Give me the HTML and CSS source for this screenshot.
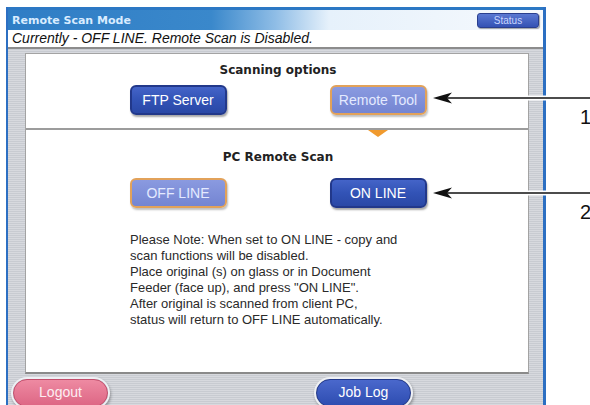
FILE: index.html
```html
<!DOCTYPE html>
<html>
<head>
<meta charset="utf-8">
<link rel="stylesheet" href="styles.css">
</head>
<body>
<div class="stage">
  <div class="screen">
    <div class="titlebar"><span class="title">Remote Scan Mode</span></div>
    <div class="statusline">Currently - OFF LINE. Remote Scan is Disabled.</div>
    <div class="status-btn">Status</div>
    <div class="workarea">
      <div class="panel">
        <section class="options">
          <h2 class="heading">Scanning options</h2>
          <div class="btn-row">
            <span class="btn dark">FTP Server</span>
            <span class="btn light sel">Remote Tool</span>
          </div>
        </section>
        <section class="remote">
          <h2 class="heading">PC Remote Scan</h2>
          <div class="btn-row">
            <span class="btn light">OFF LINE</span>
            <span class="btn dark">ON LINE</span>
          </div>
          <p class="note">Please Note: When set to ON LINE - copy and<br>scan functions will be disabled.<br>Place original (s) on glass or in Document<br>Feeder (face up), and press "ON LINE".<br>After original is scanned from client PC,<br>status will return to OFF LINE automatically.</p>
        </section>
      </div>
      <div class="footer">
        <span class="pill pink">Logout</span>
        <span class="pill blue">Job Log</span>
      </div>
    </div>
  </div>
</div>
<svg class="callouts" width="590" height="405" viewBox="0 0 590 405">
  <g>
    <line x1="440" y1="98" x2="590" y2="98" stroke="#fff" stroke-width="5"/>
    <line x1="440" y1="98" x2="590" y2="98" stroke="#111" stroke-width="1.3"/>
    <polygon points="433,98 452,92.5 447,98 452,103.5" fill="#111"/>
    <line x1="440" y1="193" x2="590" y2="193" stroke="#fff" stroke-width="5"/>
    <line x1="440" y1="193" x2="590" y2="193" stroke="#111" stroke-width="1.3"/>
    <polygon points="433,193 452,187.5 447,193 452,198.5" fill="#111"/>
  </g>
  <text x="580" y="124" class="num">1</text>
  <text x="580" y="219" class="num">2</text>
</svg>
</body>
</html>
```

FILE: styles.css
```css
* { box-sizing: border-box; margin: 0; padding: 0; }
html, body { width: 590px; height: 405px; overflow: hidden; background: #fff; }
body { font-family: "Liberation Sans", Arial, sans-serif; position: relative; }

.stage { padding: 7px 0 0 6px; }

.screen {
  width: 540px;
  height: 398px;
  overflow: hidden;
  position: relative;
  display: flex;
  flex-direction: column;
  border-left: 2px solid #2c6fc2;
  border-right: 3px solid #2c6fc2;
  background: repeating-linear-gradient(to bottom, #c8cbd1 0 1px, #d7d9de 1px 2px);
}

.titlebar {
  height: 23px;
  flex: none;
  display: flex;
  align-items: center;
  padding-left: 4px;
  border-top: 3px solid #2c78c4;
  background: linear-gradient(to right, #2f7dc5 0%, #3a88cb 38%, #8fbde6 50%, #e6f1fb 60%, #f6f9fd 100%);
}
.title {
  font: bold 11px "DejaVu Sans", sans-serif;
  color: #d9ecff;
}

.statusline {
  height: 19px;
  flex: none;
  background: #fff;
  border-bottom: 2px solid #8c8c8c;
  padding-left: 4px;
  font: italic 14px/17px "Liberation Sans", Arial, sans-serif;
  color: #111;
}

.status-btn {
  position: absolute;
  top: 6px;
  right: 4px;
  width: 62px;
  height: 15px;
  border-radius: 3px;
  background: linear-gradient(to bottom, #5a78d2, #3452b4);
  border: 1px solid #2a3f8e;
  box-shadow: 1px 1px 1px rgba(0,0,0,0.35);
  color: #c9d6ff;
  font: 10px/13px "Liberation Sans", Arial, sans-serif;
  text-align: center;
}

.workarea {
  flex: 1;
  display: flex;
  flex-direction: column;
  padding: 4px 14px 0 17px;
}

.panel {
  height: 321px;
  flex: none;
  background: #fff;
  border: 1px solid #a3a3a3;
  border-bottom: 2px solid #8a8a8a;
  display: flex;
  flex-direction: column;
}

.heading {
  font: bold 12px/16px "DejaVu Sans", sans-serif;
  color: #222;
  text-align: center;
  padding-left: 2px;
}

.options {
  height: 76px;
  flex: none;
  border-bottom: 2px solid #9c9c9c;
  padding-top: 8px;
  display: flex;
  flex-direction: column;
  gap: 7px;
}

.btn-row {
  display: flex;
  justify-content: center;
  gap: 103px;
  padding-left: 2px;
}

.btn {
  position: relative;
  width: 97px;
  height: 30px;
  border-radius: 6px;
  font: 14px/26px "Liberation Sans", Arial, sans-serif;
  text-align: center;
}
.btn.dark {
  background: linear-gradient(to bottom, #4464c8 0%, #3253b6 50%, #2a48a6 100%);
  border: 2px solid #22388a;
  color: #fff;
  box-shadow: 1px 2px 2px rgba(0,0,0,0.35);
}
.btn.light {
  background: linear-gradient(to bottom, #8a9ae0, #7485d2);
  border: 2px solid #e2a25a;
  color: #e4eaff;
  box-shadow: 1px 2px 2px rgba(0,0,0,0.25);
}
.btn.sel::after {
  content: "";
  position: absolute;
  left: 50%;
  top: 43px;
  margin-left: -10px;
  border-left: 10px solid transparent;
  border-right: 10px solid transparent;
  border-top: 7px solid #f09a2e;
}

.remote {
  flex: 1;
  padding-top: 19px;
  display: flex;
  flex-direction: column;
}
.remote .btn-row { margin-top: 13px; }

.note {
  margin-top: 24px;
  padding-left: 104px;
  font: 13px/16px "Liberation Sans", Arial, sans-serif;
  color: #2a2a2a;
}

.footer {
  display: flex;
  padding: 5px 0 0 0;
  margin-left: -12px;
  gap: 208px;
}

.pill {
  width: 95px;
  height: 28px;
  border-radius: 14px;
  font: 14px/24px "Liberation Sans", Arial, sans-serif;
  text-align: center;
  color: #fff;
  box-shadow: 0 0 0 2px #eef0f4, 1px 2px 3px 2px rgba(0,0,0,0.3);
}
.pill.pink {
  background: linear-gradient(to bottom, #ee8aa2, #dd6684);
  border: 1px solid #c24e6c;
  color: #fdeef2;
}
.pill.blue {
  background: linear-gradient(to bottom, #4a68cc, #2d4cb0);
  border: 1px solid #22388a;
}

.callouts {
  position: absolute;
  left: 0;
  top: 0;
}
.num {
  font: 20px "Liberation Sans", Arial, sans-serif;
  fill: #111;
}
```
